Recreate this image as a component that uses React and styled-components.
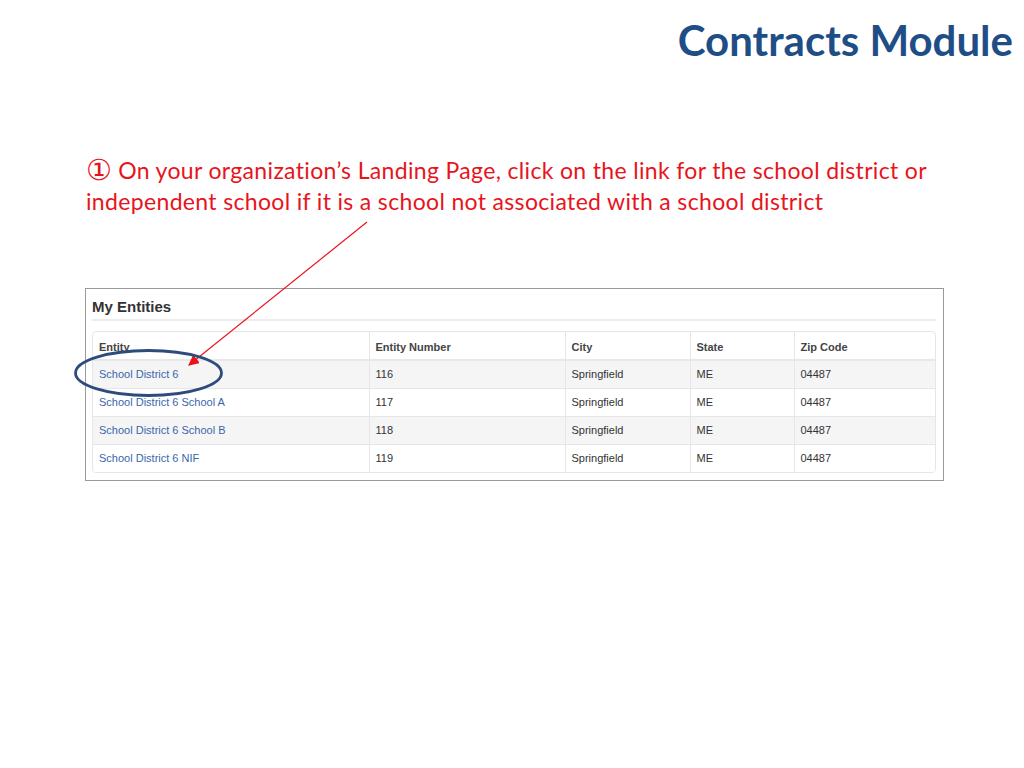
import React from 'react'
import styled, { createGlobalStyle } from 'styled-components'

const GlobalStyle = createGlobalStyle`
    html, body {
        margin: 0;
        padding: 0;
        background: #ffffff;
    }
`

const entities = [
    { name: 'School District 6', number: '116', city: 'Springfield', state: 'ME', zip: '04487' },
    { name: 'School District 6 School A', number: '117', city: 'Springfield', state: 'ME', zip: '04487' },
    { name: 'School District 6 School B', number: '118', city: 'Springfield', state: 'ME', zip: '04487' },
    { name: 'School District 6 NIF', number: '119', city: 'Springfield', state: 'ME', zip: '04487' },
]

const columns = [
    { label: 'Entity', width: 276 },
    { label: 'Entity Number', width: 196 },
    { label: 'City', width: 125 },
    { label: 'State', width: 104 },
    { label: 'Zip Code', width: 142 },
]

export default function App() {
    return (
        <Slide>
            <GlobalStyle />
            <Title>Contracts Module</Title>

            {/* step instruction */}
            <Instruction>
                <StepNo>①</StepNo> On your organization’s Landing Page, click on the link for the school district or
                <br />
                independent school if it is a school not associated with a school district
            </Instruction>

            {/* screenshot of the landing page table */}
            <Shot>
                <ShotHeading>My Entities</ShotHeading>
                <TableWrap>
                    <Table>
                        <colgroup>
                            {columns.map((c) => (
                                <col key={c.label} style={{ width: c.width }} />
                            ))}
                        </colgroup>
                        <thead>
                            <tr>
                                {columns.map((c) => (
                                    <Th key={c.label}>{c.label}</Th>
                                ))}
                            </tr>
                        </thead>
                        <tbody>
                            {entities.map((e, i) => (
                                <Row key={e.number} striped={i % 2 === 0}>
                                    <Td><EntityLink>{e.name}</EntityLink></Td>
                                    <Td>{e.number}</Td>
                                    <Td>{e.city}</Td>
                                    <Td>{e.state}</Td>
                                    <Td>{e.zip}</Td>
                                </Row>
                            ))}
                        </tbody>
                    </Table>
                </TableWrap>
            </Shot>

            {/* callout: arrow + circle */}
            <Callout viewBox="0 0 1024 768" width="1024" height="768">
                <defs>
                    <marker id="head" viewBox="0 0 10 10" refX="9" refY="5" markerWidth="9" markerHeight="9" orient="auto-start-reverse">
                        <path d="M0 0 L10 5 L0 10 Z" fill="#e8141c" />
                    </marker>
                </defs>
                <line x1="367" y1="222" x2="189" y2="365" stroke="#e8141c" strokeWidth="1.2" markerEnd="url(#head)" />
                <ellipse cx="148.5" cy="373" rx="73" ry="22.5" fill="none" stroke="#2d4c7c" strokeWidth="2.8" />
            </Callout>
        </Slide>
    )
}

const Slide = styled.div`
    position: relative;
    width: 1024px;
    height: 768px;
    overflow: hidden;
    background: #ffffff;
    display: flex;
    flex-direction: column;
    font-variant-ligatures: none;
`

const Title = styled.h1`
    margin: 15px 11px 0 0;
    align-self: flex-end;
    font-family: Lato, "Open Sans", sans-serif;
    font-weight: 700;
    font-size: 42px;
    line-height: 50px;
    color: #1f4e87;
`

const Instruction = styled.p`
    margin: 90px 0 0 86px;
    font-family: Lato, "Open Sans", sans-serif;
    font-size: 23px;
    letter-spacing: 0.34px;
    line-height: 31px;
    color: #e8141c;
`

const StepNo = styled.span`
    font-family: "DejaVu Sans", sans-serif;
    font-size: 29px;
    line-height: 0;
    letter-spacing: 0;
    vertical-align: -1px;
`

const Shot = styled.div`
    margin: 71px 0 0 85px;
    width: 859px;
    height: 193px;
    border: 1px solid #9a9a9a;
    box-sizing: border-box;
    padding: 9px 7px 0 6px;
    font-family: "Liberation Sans", Arial, sans-serif;
`

const ShotHeading = styled.div`
    font-size: 15px;
    font-weight: 700;
    color: #333333;
    padding-bottom: 4px;
    border-bottom: 2px solid #ececec;
    margin-bottom: 10px;
`

const TableWrap = styled.div`
    border: 1px solid #e6e6e6;
    border-radius: 4px;
    overflow: hidden;
`

const Table = styled.table`
    width: 100%;
    table-layout: fixed;
    border-collapse: collapse;
    font-size: 11px;
    color: #333333;
`

const Th = styled.th`
    text-align: left;
    font-weight: 700;
    color: #444444;
    padding: 0 6px 6px;
    height: 28px;
    vertical-align: bottom;
    box-sizing: border-box;
    border-left: 1px solid #e6e6e6;
    border-bottom: 2px solid #e8e8e8;

    &:first-child { border-left: none; }
`

const Row = styled.tr`
    background: ${(p) => (p.striped ? '#f5f5f5' : '#ffffff')};
`

const Td = styled.td`
    padding: 0 6px;
    height: 28px;
    box-sizing: border-box;
    border-left: 1px solid #e6e6e6;
    border-top: 1px solid #e6e6e6;

    &:first-child { border-left: none; }
`

const EntityLink = styled.a`
    color: #3a66ad;
    text-decoration: none;
    cursor: pointer;
`

const Callout = styled.svg`
    position: absolute;
    left: 0;
    top: 0;
    pointer-events: none;
`
